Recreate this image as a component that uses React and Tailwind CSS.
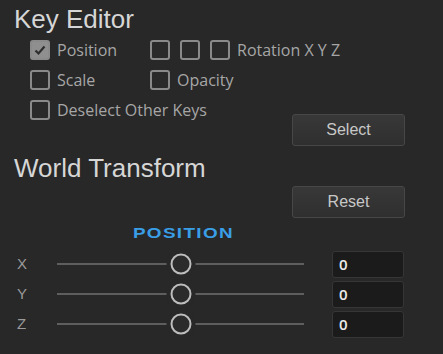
import React from "react";

function Box({ checked }) {
  return (
    <span
      className={`flex h-[20px] w-[20px] shrink-0 items-center justify-center rounded-[3px] border-2 border-[#8a8a8a] ${
        checked ? "bg-[#8f8f8f]" : "bg-[#2a2a2a]"
      }`}
    >
      {checked && (
        <svg width="14" height="14" viewBox="0 0 14 14">
          <path d="M2.5 7.5 L5.5 10.5 L11.5 3.5" fill="none" stroke="#2e2e2e" strokeWidth="2.2" />
        </svg>
      )}
    </span>
  );
}

function Check({ label, checked }) {
  return (
    <div className="flex h-[20px] items-center gap-[7px]">
      <Box checked={checked} />
      <span className="text-[16px] leading-[20px] text-[#a6a6a6]">{label}</span>
    </div>
  );
}

function Button({ children }) {
  return (
    <button className="h-[32px] w-[113px] rounded-[3px] border border-[#474747] bg-gradient-to-b from-[#383838] to-[#2f2f2f] font-['Liberation_Sans',sans-serif] text-[16px] text-[#c8c8c8]">
      {children}
    </button>
  );
}

function SliderRow({ axis }) {
  return (
    <div className="flex h-[30px] items-center">
      <span className="w-[43px] pl-[3px] font-['Liberation_Sans',sans-serif] text-[15px] text-[#9a9a9a]">{axis}</span>
      <div className="relative h-[2px] w-[247px] bg-[#5e5e5e]">
        <span className="absolute left-1/2 top-1/2 h-[21px] w-[21px] -translate-x-1/2 -translate-y-1/2 rounded-full border-[2.5px] border-[#bdbdbd] bg-[#2b2b2b] shadow-[0_0_0_4px_#282828]" />
      </div>
      <div className="ml-[28px] flex h-[27px] w-[72px] items-center rounded-[3px] border border-[#363636] bg-[#1b1b1b] pl-[6px] text-[15px] font-semibold text-[#ececec]">
        0
      </div>
    </div>
  );
}

export default function App() {
  return (
    <div className="h-[354px] w-[443px] overflow-hidden bg-[#282828] pl-[14px] pr-[38px] pt-[4px] font-['Open_Sans',sans-serif]">
      <h1 className="font-['Liberation_Sans',sans-serif] text-[26px] leading-[30px] text-[#d6d6d6]">Key Editor</h1>

      <div className="mt-[6px] flex flex-col gap-[10px] pl-[16px]">
        <div className="flex">
          <div className="w-[120px]">
            <Check label="Position" checked />
          </div>
          <div className="flex items-center gap-[10px]">
            <Box />
            <Box />
            <div className="flex items-center gap-[7px]">
              <Box />
              <span className="text-[16px] leading-[20px] text-[#a6a6a6]">Rotation X Y Z</span>
            </div>
          </div>
        </div>
        <div className="flex">
          <div className="w-[120px]">
            <Check label="Scale" />
          </div>
          <Check label="Opacity" />
        </div>
        <div className="flex items-start justify-between">
          <Check label="Deselect Other Keys" />
          <div className="mt-[14px]">
            <Button>Select</Button>
          </div>
        </div>
      </div>

      <h2 className="mt-[7px] font-['Liberation_Sans',sans-serif] text-[26px] leading-[30px] text-[#d6d6d6]">World Transform</h2>

      <div className="mt-[3px] flex justify-end">
        <Button>Reset</Button>
      </div>

      <div className="mt-[8px] flex w-[290px] justify-center pl-[49px]">
        <span className="inline-block scale-x-[1.35] font-['Liberation_Sans',sans-serif] text-[14px] font-bold leading-[14px] tracking-[1px] text-[#3a9ee6]">
          POSITION
        </span>
      </div>

      <div className="mt-[9px] flex flex-col">
        <SliderRow axis="X" />
        <SliderRow axis="Y" />
        <SliderRow axis="Z" />
      </div>
    </div>
  );
}
